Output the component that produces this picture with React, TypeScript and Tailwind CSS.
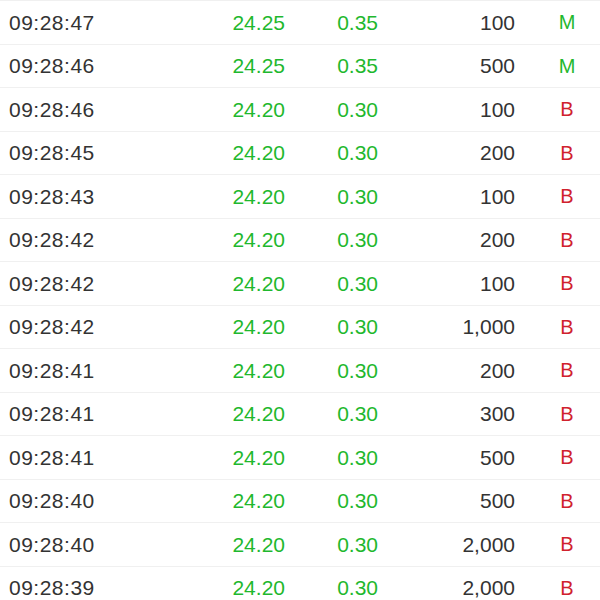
import React from "react";

type Row = { t: string; p: string; c: string; q: string; f: "M" | "B" };

const rows: Row[] = [
  { t: "09:28:47", p: "24.25", c: "0.35", q: "100", f: "M" },
  { t: "09:28:46", p: "24.25", c: "0.35", q: "500", f: "M" },
  { t: "09:28:46", p: "24.20", c: "0.30", q: "100", f: "B" },
  { t: "09:28:45", p: "24.20", c: "0.30", q: "200", f: "B" },
  { t: "09:28:43", p: "24.20", c: "0.30", q: "100", f: "B" },
  { t: "09:28:42", p: "24.20", c: "0.30", q: "200", f: "B" },
  { t: "09:28:42", p: "24.20", c: "0.30", q: "100", f: "B" },
  { t: "09:28:42", p: "24.20", c: "0.30", q: "1,000", f: "B" },
  { t: "09:28:41", p: "24.20", c: "0.30", q: "200", f: "B" },
  { t: "09:28:41", p: "24.20", c: "0.30", q: "300", f: "B" },
  { t: "09:28:41", p: "24.20", c: "0.30", q: "500", f: "B" },
  { t: "09:28:40", p: "24.20", c: "0.30", q: "500", f: "B" },
  { t: "09:28:40", p: "24.20", c: "0.30", q: "2,000", f: "B" },
  { t: "09:28:39", p: "24.20", c: "0.30", q: "2,000", f: "B" },
];

export default function App() {
  return (
    <div
      className="w-[600px] h-[600px] overflow-hidden bg-white border-t border-[#f0f0f0]"
      style={{ fontFamily: '"Liberation Sans", Arial, sans-serif' }}
    >
      {rows.map((r, i) => (
        <div
          key={i}
          className="grid grid-cols-[200px_85px_93px_137px_1fr] items-center h-[43.5px] border-b border-[#f0f0f0] text-[21px] leading-none"
        >
          <div className="pl-[9px] text-[#333333] tracking-[0.5px]">{r.t}</div>
          <div className="text-right text-[#1fb82e]">{r.p}</div>
          <div className="text-right text-[#1fb82e]">{r.c}</div>
          <div className="text-right text-[#333333]">{r.q}</div>
          <div
            className={`pl-[19px] text-center text-[20px] ${
              r.f === "M" ? "text-[#1fb82e]" : "text-[#d0222e]"
            }`}
          >
            {r.f}
          </div>
        </div>
      ))}
    </div>
  );
}
